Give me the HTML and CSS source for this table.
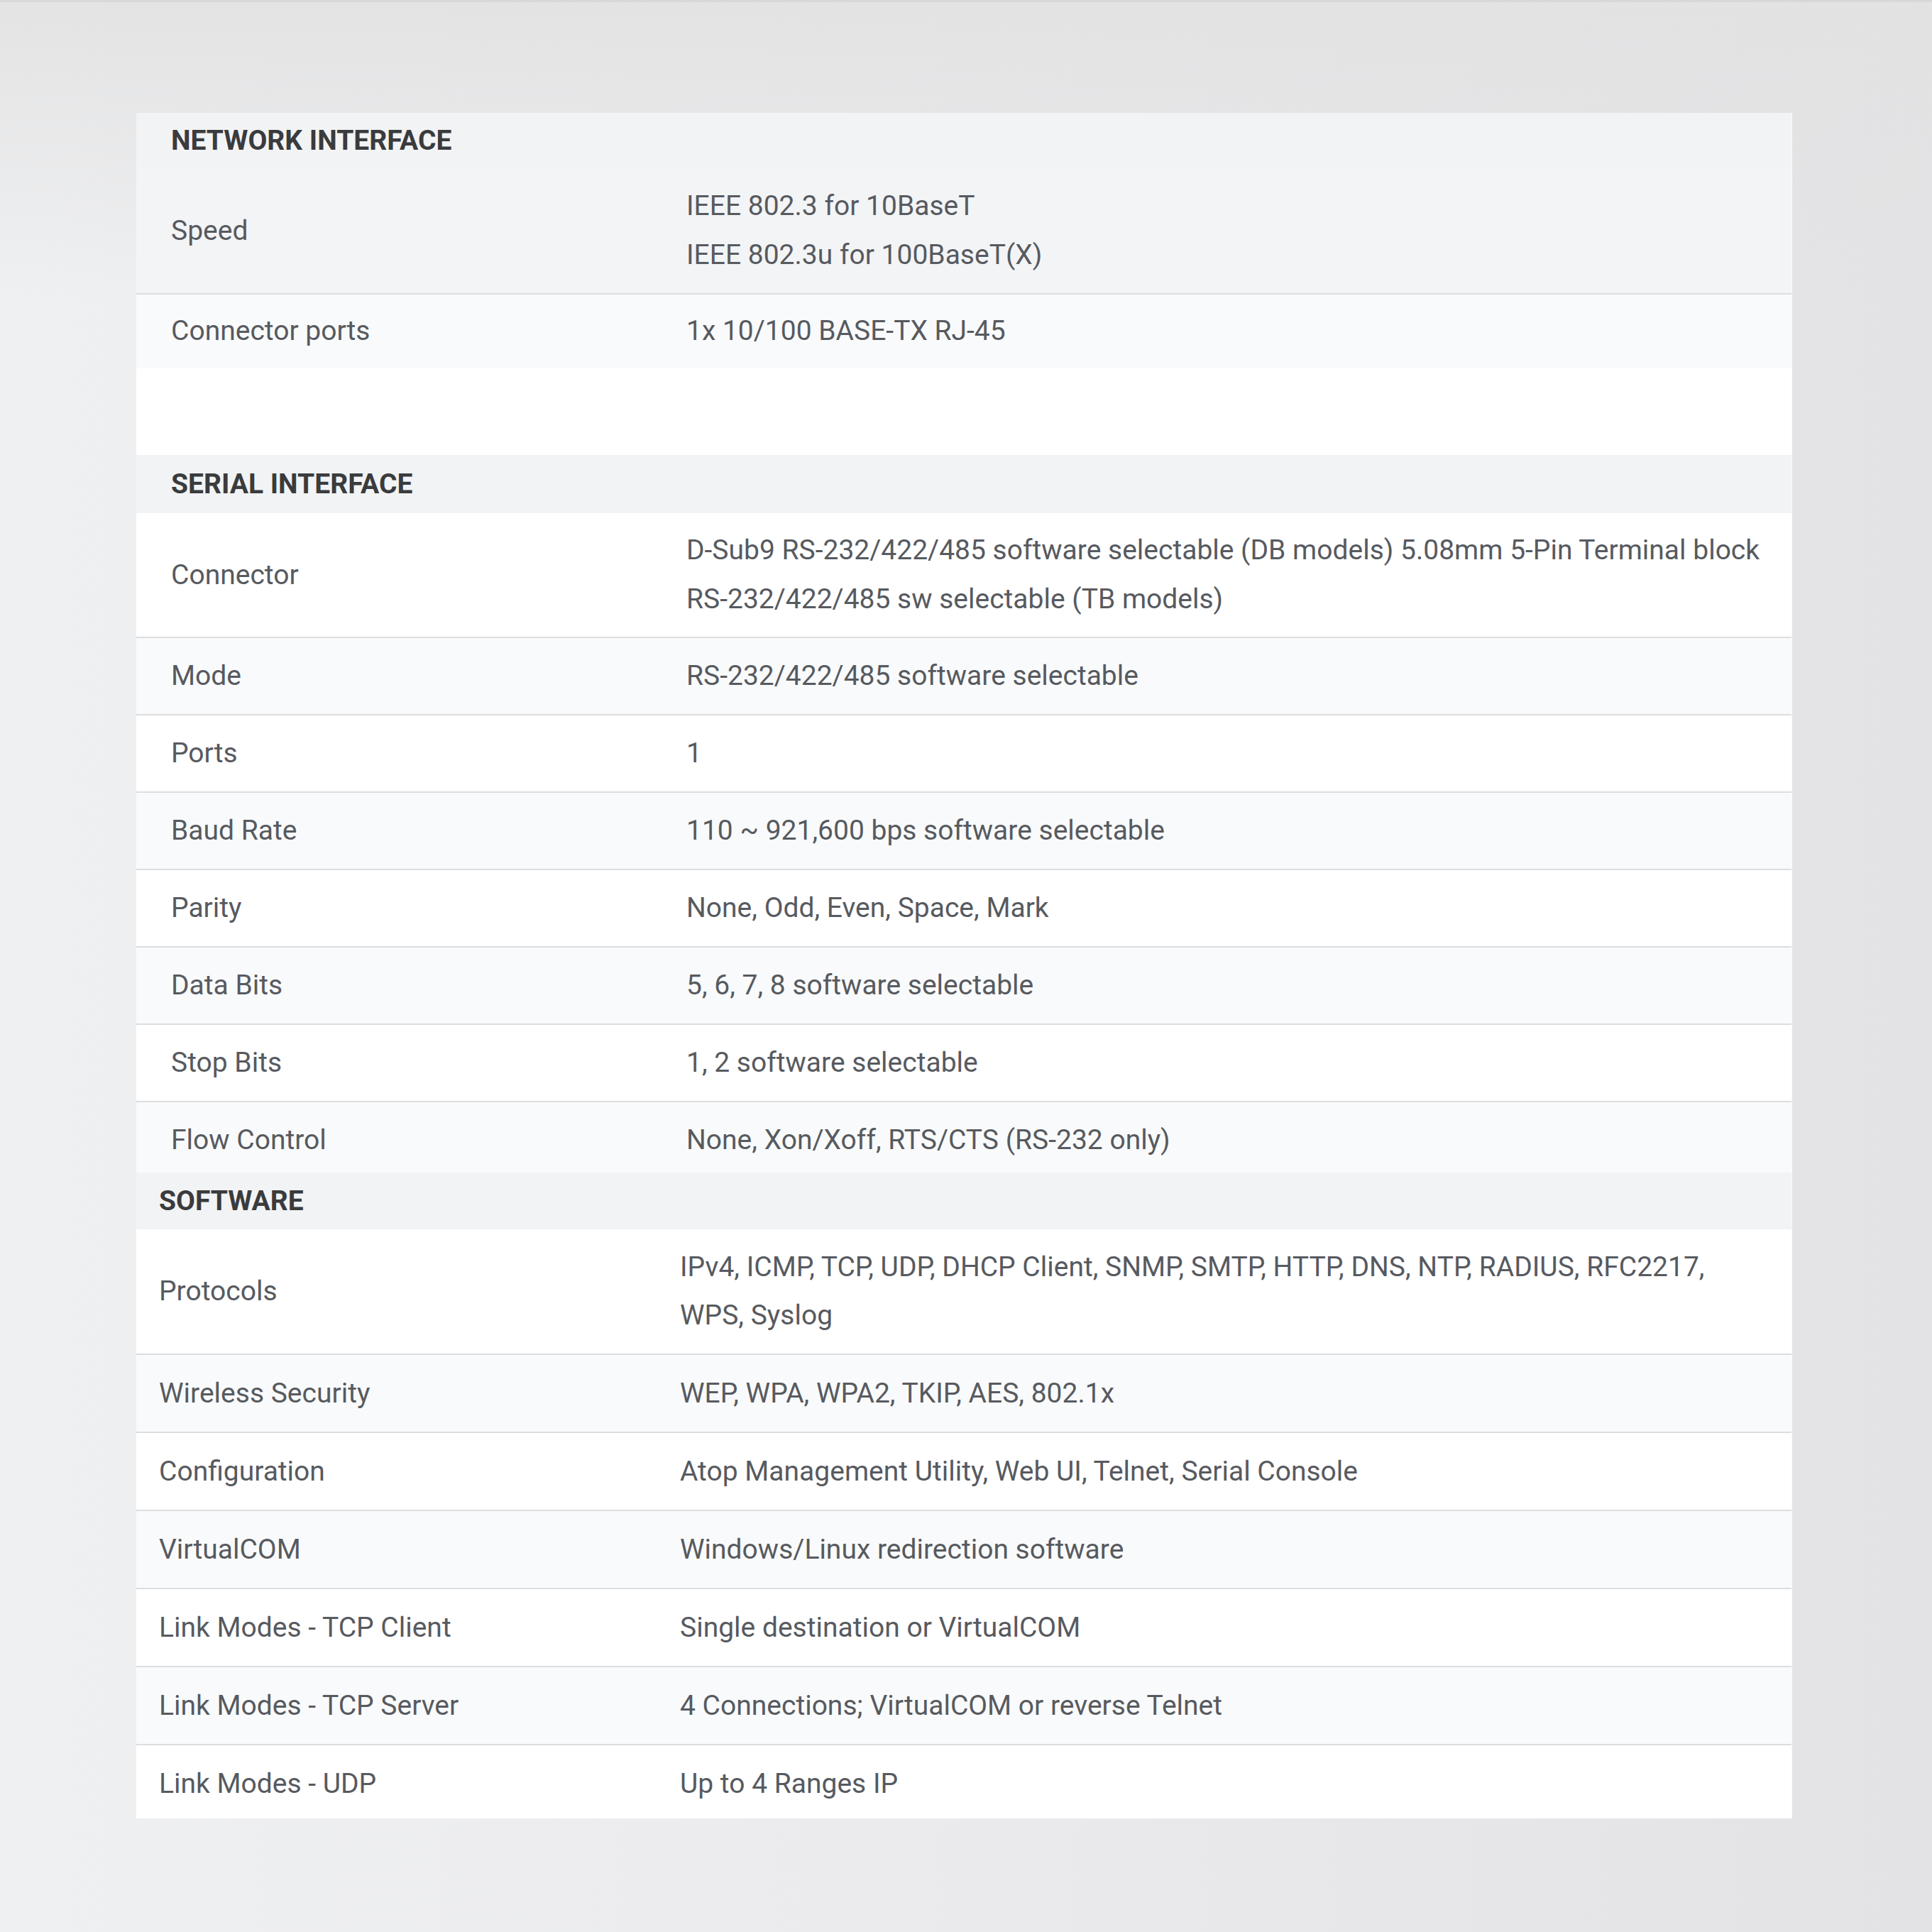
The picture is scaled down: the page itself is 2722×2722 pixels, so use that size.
FILE: index.html
```html
<!DOCTYPE html>
<html lang="en">
<head>
<meta charset="utf-8">
<title>Specifications</title>
<link rel="stylesheet" href="styles.css">
</head>
<body>
<div class="page">
  <div class="spec">
    <section class="sec">
      <div class="sec-head sec-head--first">NETWORK INTERFACE</div>
      <div class="row row--tint row--line row--speed">
        <div class="label">Speed</div>
        <div class="value">IEEE 802.3 for 10BaseT<br>IEEE 802.3u for 100BaseT(X)</div>
      </div>
      <div class="row row--soft row--ports">
        <div class="label">Connector ports</div>
        <div class="value">1x 10/100 BASE-TX RJ-45</div>
      </div>
      <div class="gap"></div>
    </section>

    <section class="sec">
      <div class="sec-head">SERIAL INTERFACE</div>
      <div class="row row--line row--double">
        <div class="label">Connector</div>
        <div class="value">D-Sub9 RS-232/422/485 software selectable (DB models) 5.08mm 5-Pin Terminal block<br>RS-232/422/485 sw selectable (TB models)</div>
      </div>
      <div class="row row--soft row--line">
        <div class="label">Mode</div>
        <div class="value">RS-232/422/485 software selectable</div>
      </div>
      <div class="row row--line">
        <div class="label">Ports</div>
        <div class="value">1</div>
      </div>
      <div class="row row--soft row--line">
        <div class="label">Baud Rate</div>
        <div class="value">110 ~ 921,600 bps software selectable</div>
      </div>
      <div class="row row--line">
        <div class="label">Parity</div>
        <div class="value">None, Odd, Even, Space, Mark</div>
      </div>
      <div class="row row--soft row--line">
        <div class="label">Data Bits</div>
        <div class="value">5, 6, 7, 8 software selectable</div>
      </div>
      <div class="row row--line">
        <div class="label">Stop Bits</div>
        <div class="value">1, 2 software selectable</div>
      </div>
      <div class="row row--soft row--flow">
        <div class="label">Flow Control</div>
        <div class="value">None, Xon/Xoff, RTS/CTS (RS-232 only)</div>
      </div>
    </section>

    <section class="sec sec--narrow">
      <div class="sec-head sec-head--sw">SOFTWARE</div>
      <div class="row row--line row--proto">
        <div class="label">Protocols</div>
        <div class="value">IPv4, ICMP, TCP, UDP, DHCP Client, SNMP, SMTP, HTTP, DNS, NTP, RADIUS, RFC2217,<br>WPS, Syslog</div>
      </div>
      <div class="row row--soft row--line">
        <div class="label">Wireless Security</div>
        <div class="value">WEP, WPA, WPA2, TKIP, AES, 802.1x</div>
      </div>
      <div class="row row--line">
        <div class="label">Configuration</div>
        <div class="value">Atop Management Utility, Web UI, Telnet, Serial Console</div>
      </div>
      <div class="row row--soft row--line">
        <div class="label">VirtualCOM</div>
        <div class="value">Windows/Linux redirection software</div>
      </div>
      <div class="row row--line">
        <div class="label">Link Modes - TCP Client</div>
        <div class="value">Single destination or VirtualCOM</div>
      </div>
      <div class="row row--soft row--line">
        <div class="label">Link Modes - TCP Server</div>
        <div class="value">4 Connections; VirtualCOM or reverse Telnet</div>
      </div>
      <div class="row row--end">
        <div class="label">Link Modes - UDP</div>
        <div class="value">Up to 4 Ranges IP</div>
      </div>
    </section>
  </div>
</div>
</body>
</html>
```

FILE: styles.css
```css
html, body {
  margin: 0;
  padding: 0;
}

body {
  width: 2722px;
  height: 2722px;
  overflow: hidden;
  font-family: Roboto, "Liberation Sans", sans-serif;
  background:
    linear-gradient(to bottom, rgba(226,226,227,0.9) 0, rgba(226,226,227,0) 420px),
    linear-gradient(to right, #eff0f1 0%, #ebebed 45%, #e3e3e5 100%);
  border-top: 3px solid #d8d8d9;
  box-sizing: border-box;
}

.page {
  padding: 156px 0 0 192px;
}

.spec {
  width: 2332px;
  background: #ffffff;
  color: #575a5f;
  font-size: 39px;
  box-shadow: 1px 0 0 rgba(255,255,255,0.8);
}

/* section headings */
.sec-head {
  height: 82px;
  line-height: 82px;
  padding-left: 49px;
  background: #f2f3f5;
  color: #3a3b3d;
  font-weight: 700;
  font-size: 39px;
}

.sec-head--first {
  height: 78px;
  line-height: 78px;
}

.sec-head--sw {
  height: 80px;
  line-height: 80px;
}

/* rows */
.row {
  display: flex;
  align-items: center;
  padding: 20px 0;
  line-height: 67px;
  background: #ffffff;
}

.row--tint {
  background: #f3f4f6;
}

.row--soft {
  background: #f9fafb;
}

.row--line {
  border-bottom: 2px solid #dcdddf;
}

.row--speed {
  padding: 19px 0;
  line-height: 69px;
}

.row--ports {
  padding: 18px 0 19px;
}

.row--double {
  padding: 18px 0;
  line-height: 69px;
}

.row--flow {
  padding: 20px 0 12px;
}

.label {
  width: 726px;
  padding-left: 49px;
  flex: none;
}

.value {
  flex: 1;
  padding-right: 30px;
}

.gap {
  height: 122px;
  background: #ffffff;
}

/* software section: narrower inset, slightly taller rows */
.sec--narrow .sec-head {
  padding-left: 32px;
}

.sec--narrow .label {
  padding-left: 32px;
  width: 734px;
}

.sec--narrow .row {
  line-height: 68px;
}

.sec--narrow .row--proto {
  padding: 19px 0 20px;
}

.sec--narrow .row--end {
  padding: 20px 0 15px;
}
```
